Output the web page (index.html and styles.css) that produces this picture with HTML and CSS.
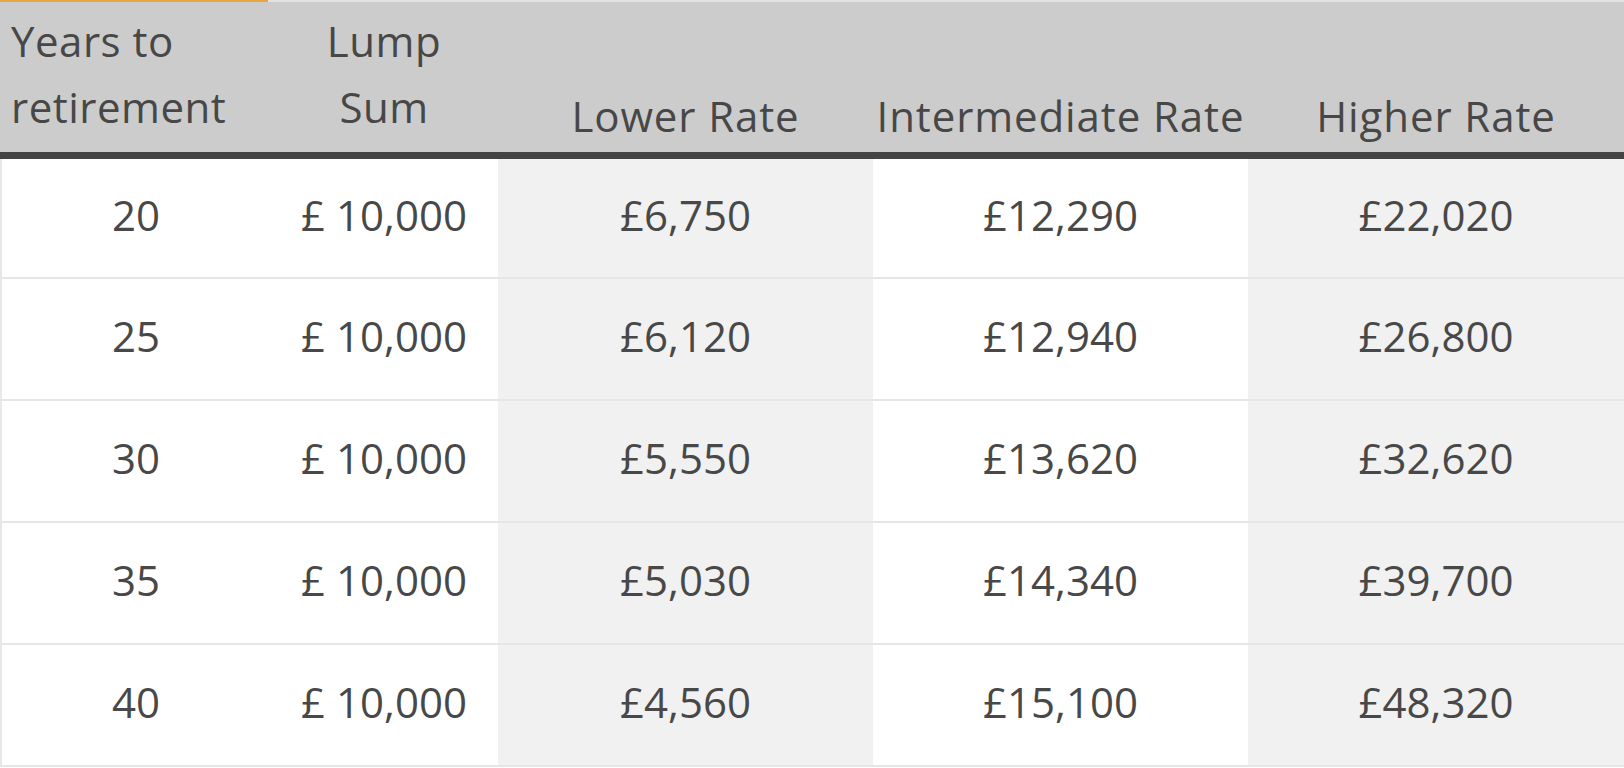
FILE: index.html
```html
<!DOCTYPE html>
<html lang="en">
<head>
<meta charset="utf-8">
<title>Pension table</title>
<link rel="stylesheet" href="styles.css">
</head>
<body>
<div class="tabline"><div class="tab-active"></div><div class="tab-rest"></div></div>
<table class="rates">
  <colgroup>
    <col class="c1"><col class="c2"><col class="c3"><col class="c4"><col class="c5">
  </colgroup>
  <thead>
    <tr>
      <th class="h-left h-two">Years to<br>retirement</th>
      <th class="h-two">Lump<br>Sum</th>
      <th>Lower Rate</th>
      <th>Intermediate Rate</th>
      <th>Higher Rate</th>
    </tr>
  </thead>
  <tbody>
    <tr class="first"><td>20</td><td>£ 10,000</td><td class="shade">£6,750</td><td>£12,290</td><td class="shade">£22,020</td></tr>
    <tr><td>25</td><td>£ 10,000</td><td class="shade">£6,120</td><td>£12,940</td><td class="shade">£26,800</td></tr>
    <tr><td>30</td><td>£ 10,000</td><td class="shade">£5,550</td><td>£13,620</td><td class="shade">£32,620</td></tr>
    <tr><td>35</td><td>£ 10,000</td><td class="shade">£5,030</td><td>£14,340</td><td class="shade">£39,700</td></tr>
    <tr><td>40</td><td>£ 10,000</td><td class="shade">£4,560</td><td>£15,100</td><td class="shade">£48,320</td></tr>
  </tbody>
</table>
</body>
</html>
```

FILE: styles.css
```css
html, body {
  margin: 0;
  padding: 0;
  background: #ffffff;
}

body {
  width: 1624px;
  overflow: hidden;
  font-family: "Open Sans", "Liberation Sans", sans-serif;
  color: #464646;
}

.tabline {
  display: flex;
  height: 2px;
}

.tab-active {
  width: 268px;
  background: #e9a53f;
}

.tab-rest {
  flex: 1;
  background: #e2e2e2;
}

.rates {
  width: 1624px;
  table-layout: fixed;
  border-collapse: separate;
  border-spacing: 0;
}

.c1 { width: 270px; }
.c2 { width: 228px; }
.c3 { width: 375px; }
.c4 { width: 375px; }
.c5 { width: 376px; }

.rates th,
.rates td {
  box-sizing: border-box;
  padding: 0;
  font-size: 42px;
  font-weight: 400;
  text-align: center;
  white-space: nowrap;
}

.rates th {
  height: 157px;
  background: #cccccc;
  border-bottom: 7px solid #444444;
  vertical-align: bottom;
  line-height: 66px;
  padding-bottom: 3px;
  color: #474747;
  letter-spacing: 0.9px;
}

.rates th.h-two {
  padding-bottom: 12px;
  letter-spacing: 0.5px;
}

.rates th.h-left {
  text-align: left;
  padding-left: 11px;
}

.rates td {
  height: 122px;
  border-bottom: 2px solid #e6e6e6;
  vertical-align: middle;
  line-height: 57px;
  padding-bottom: 8px;
  background: #ffffff;
  color: #484848;
}

.rates tr.first td {
  height: 120px;
}

.rates td:first-child {
  border-left: 2px solid #e8e8e8;
}

.rates td.shade {
  background: #f1f1f1;
}
```
